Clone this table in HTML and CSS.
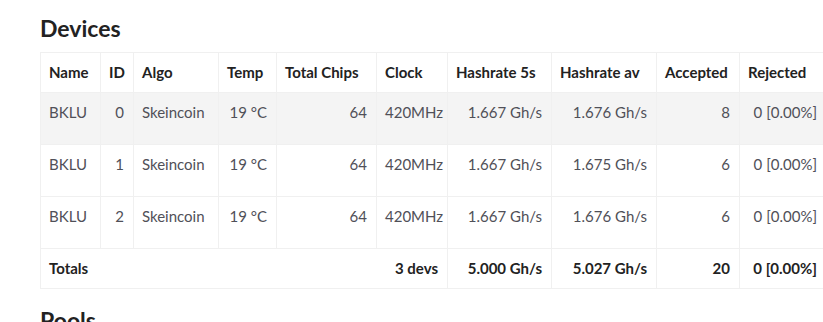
FILE: index.html
```html
<!DOCTYPE html>
<html>
<head>
<meta charset="utf-8">
<link rel="stylesheet" href="styles.css">
</head>
<body>
<div class="page">
  <h2 class="title">Devices</h2>
  <table class="devices">
    <colgroup>
      <col class="c-name"><col class="c-id"><col class="c-algo"><col class="c-temp"><col class="c-chips"><col class="c-clock"><col class="c-h5"><col class="c-hav"><col class="c-acc"><col class="c-rej">
    </colgroup>
    <thead>
      <tr><th>Name</th><th>ID</th><th>Algo</th><th>Temp</th><th>Total Chips</th><th>Clock</th><th>Hashrate 5s</th><th>Hashrate av</th><th>Accepted</th><th>Rejected</th></tr>
    </thead>
    <tbody>
      <tr class="row odd"><td>BKLU</td><td class="r">0</td><td>Skeincoin</td><td class="r">19 °C</td><td class="r">64</td><td>420MHz</td><td class="r">1.667 Gh/s</td><td class="r">1.676 Gh/s</td><td class="r">8</td><td class="r">0 [0.00%]</td></tr>
      <tr class="row"><td>BKLU</td><td class="r">1</td><td>Skeincoin</td><td class="r">19 °C</td><td class="r">64</td><td>420MHz</td><td class="r">1.667 Gh/s</td><td class="r">1.675 Gh/s</td><td class="r">6</td><td class="r">0 [0.00%]</td></tr>
      <tr class="row"><td>BKLU</td><td class="r">2</td><td>Skeincoin</td><td class="r">19 °C</td><td class="r">64</td><td>420MHz</td><td class="r">1.667 Gh/s</td><td class="r">1.676 Gh/s</td><td class="r">6</td><td class="r">0 [0.00%]</td></tr>
    </tbody>
    <tfoot>
      <tr class="totals"><td colspan="6"><div class="split"><span>Totals</span><span>3 devs</span></div></td><td class="r">5.000 Gh/s</td><td class="r">5.027 Gh/s</td><td class="r">20</td><td class="r">0 [0.00%]</td></tr>
    </tfoot>
  </table>
  <h2 class="title next">Pools</h2>
</div>
</body>
</html>
```
FILE: styles.css
```css
html, body {
  margin: 0;
  padding: 0;
  background: #ffffff;
}
body {
  font-family: Lato, "Open Sans", sans-serif;
  color: #505058;
  overflow: hidden;
}
.page {
  padding: 0 0 0 40px;
  width: 783px;
  overflow: hidden;
}
.title {
  margin: 0;
  padding-top: 15px;
  height: 52px;
  box-sizing: border-box;
  font-size: 23px;
  line-height: 26px;
  font-weight: 700;
  color: #222;
}
.title.next {
  padding-top: 18px;
  height: 50px;
}
.devices {
  border-collapse: collapse;
  table-layout: fixed;
  width: 786px;
  border: 1px solid #f0f0f0;
  font-size: 15px;
  line-height: 20px;
}
.c-name { width: 60px; }
.c-id { width: 33px; }
.c-algo { width: 85px; }
.c-temp { width: 58px; }
.c-chips { width: 100px; }
.c-clock { width: 71px; }
.c-h5 { width: 104px; }
.c-hav { width: 105px; }
.c-acc { width: 83px; }
.c-rej { width: 87px; }
.devices th, .devices td {
  border: 1px solid #f0f0f0;
  padding: 9px 9px 10px 8px;
  text-align: left;
  vertical-align: top;
  white-space: nowrap;
}
.devices th {
  color: #222;
  font-weight: 700;
}
.devices .row td {
  padding-bottom: 22px;
}
.devices .odd td {
  background: #f4f4f4;
}
.devices td.r {
  text-align: right;
}
.totals td {
  color: #222;
  font-weight: 700;
  padding-bottom: 10px;
}
.split {
  display: flex;
  justify-content: space-between;
}
```
